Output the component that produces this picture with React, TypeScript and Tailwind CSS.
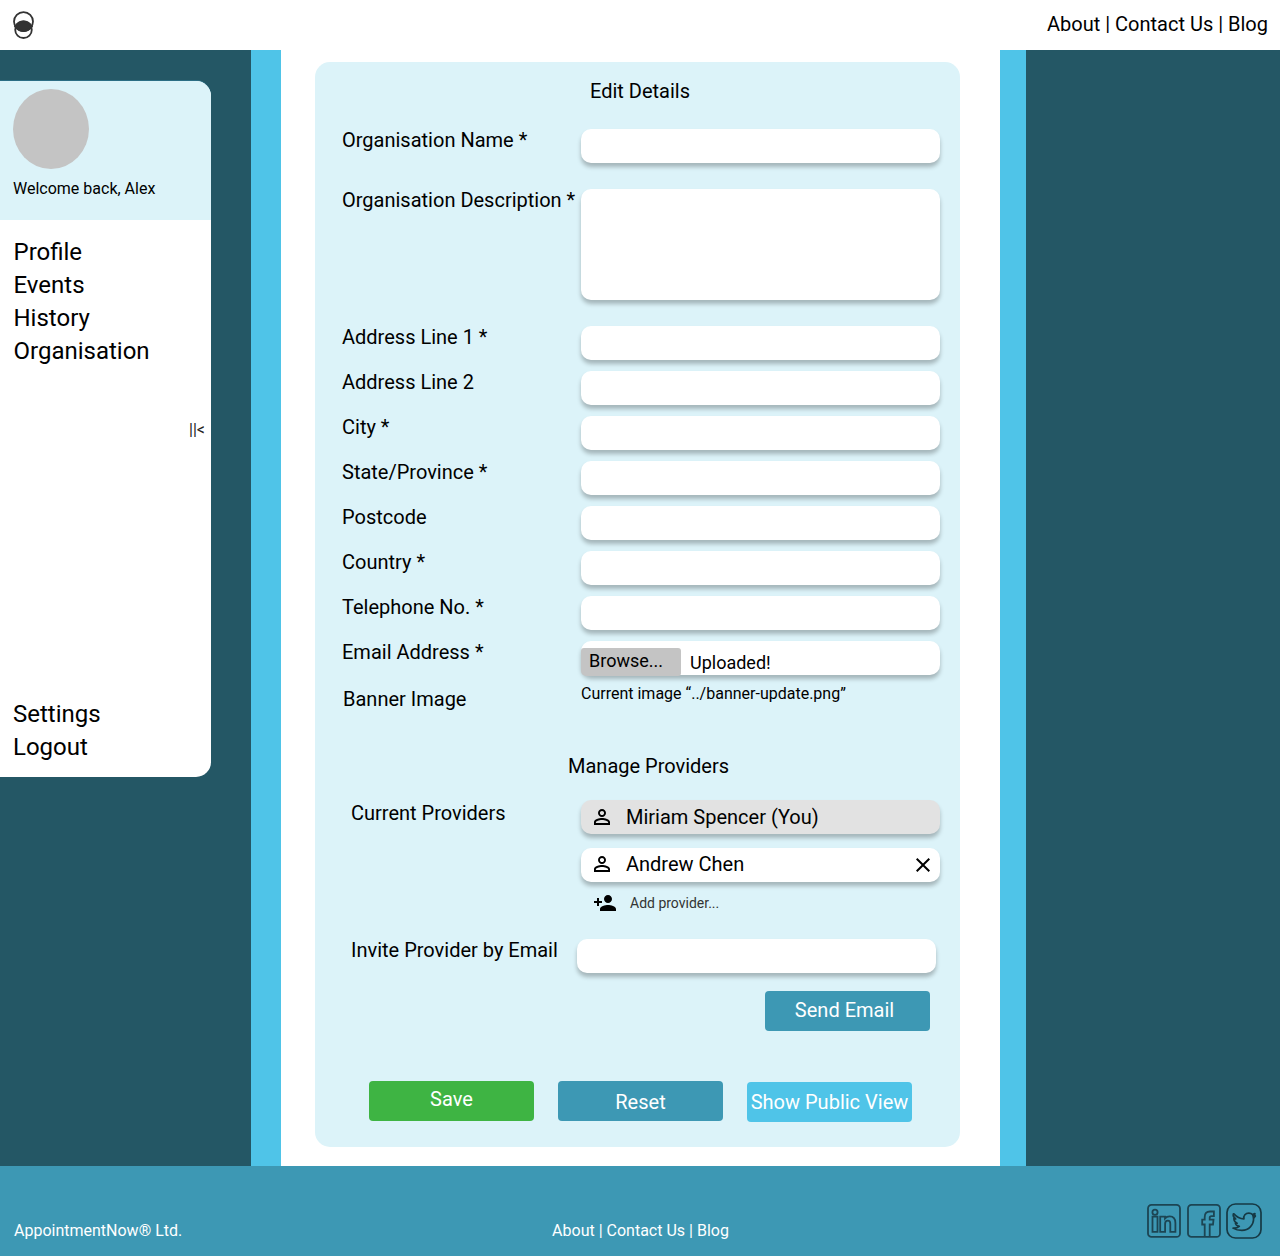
import type { ReactNode } from "react";

const FIELD = "w-[359px] shrink-0 rounded-[10px] shadow-[0_4px_4px_rgba(0,0,0,0.25)]";

function Logo() {
  return (
    <svg width="22" height="30" viewBox="0 0 22 30" fill="none" stroke="#333333" strokeWidth="1.8">
      <circle cx="10.5" cy="11.6" r="9.500" />
      <circle cx="10.5" cy="19.700" r="8.300" />
      <path d="M2 16.4C4.5 12.900 7.3 11.400 10.5 11.400s6 1.500 8.500 5C16.500 19.600 14 21.100 10.500 21.100S4.500 19.600 2 16.400Z" fill="#333333" />
    </svg>
  );
}

function PersonIcon() {
  return (
    <svg width="16" height="16" viewBox="4 4 16 16" fill="#000">
      <path d="M12 5.900c1.160 0 2.100.940 2.100 2.100s-.940 2.100-2.100 2.100S9.900 9.160 9.900 8s.940-2.100 2.100-2.100m0 9c2.970 0 6.100 1.460 6.100 2.100v1.100H5.900V17c0-.640 3.130-2.100 6.100-2.100M12 4C9.790 4 8 5.790 8 8s1.790 4 4 4 4-1.790 4-4-1.790-4-4-4zm0 9c-2.670 0-8 1.340-8 4v3h16v-3c0-2.660-5.330-4-8-4z" />
    </svg>
  );
}

function AddPersonIcon() {
  return (
    <svg width="22" height="16" viewBox="1 4 22 16" fill="#000">
      <path d="M15 12c2.210 0 4-1.790 4-4s-1.790-4-4-4-4 1.790-4 4 1.790 4 4 4zm-9-2V7H4v3H1v2h3v3h2v-3h3v-2H6zm9 4c-2.670 0-8 1.340-8 4v2h16v-2c0-2.660-5.330-4-8-4z" />
    </svg>
  );
}

function CloseIcon() {
  return (
    <svg width="14" height="14" viewBox="5 5 14 14" fill="#000">
      <path d="M19 6.410 17.590 5 12 10.590 6.410 5 5 6.410 10.590 12 5 17.590 6.410 19 12 13.410 17.590 19 19 17.590 13.410 12z" />
    </svg>
  );
}

function SocialIcons() {
  return (
    <div className="flex">
      <svg width="34" height="36" viewBox="0 0 34 36" fill="none" stroke="#1c4553" strokeWidth="1.800">
        <rect x="1" y="1.900" width="32" height="32" rx="3.500" />
        <circle cx="8" cy="9.300" r="2.600" />
        <path d="M5.500 13.700h5v15.200h-5zM13.200 13.700h4.800v1.700c1-1.300 2.500-2 4.700-2 4 0 5.700 2.500 5.700 6.600v8.900h-5.100v-8.100c0-2.100-.700-3.200-2.400-3.200-1.800 0-2.800 1.200-2.800 3.200v8.100h-4.900z" />
      </svg>
      <svg className="ml-1.5" width="34" height="36" viewBox="0 0 34 36" fill="none" stroke="#1c4553" strokeWidth="1.800">
        <rect x="1" y="1.900" width="32" height="32" rx="3.500" />
        <path d="M17.700 34V21.500h-2.500v-4.800h2.500v-2.500c0-4 2-5.700 5.300-5.700h3.900v4.700h-2.500c-1.300 0-1.700.500-1.700 1.600v1.900h3.800l-.5 4.800h-3.300V34" />
      </svg>
      <svg className="ml-[5px]" width="36" height="36" viewBox="0 0 36 36" fill="none" stroke="#163944" strokeWidth="1.700" strokeLinejoin="round">
        <rect x="1" y="1" width="34" height="34" rx="8.500" />
        <path d="M7.900 10.800c2.700 3.200 6 5 10 5.200-.7-3.500 1.700-5.900 4.900-5.900 1.600 0 2.900.6 3.900 1.600l2-1-.6 2.200 1.200.1-1.700 2c.2 7.100-4.900 12.400-11.700 12.400-3.500 0-6.300-.7-8.900-2.300 2.800.2 4.700-.400 6.300-1.700-2-.3-3.300-1.300-3.900-3.100l1.700-.1c-2-.9-3.200-2.400-3.200-4.700l1.800.5c-2.100-1.500-2.900-3.300-2.300-5.200Z" />
        <path d="m26.700 11.700 2-1-.6 2.200 1.200.1-1.700 2Z" fill="#163944" />
      </svg>
    </div>
  );
}

function Row({ label, className, children }: { label: string; className: string; children?: ReactNode }) {
  return (
    <div className={`flex items-start justify-between ${className}`}>
      <span className="whitespace-nowrap">{label}</span>
      {children}
    </div>
  );
}

const TEXT_FIELDS = [
  "Address Line 1 *",
  "Address Line 2",
  "City *",
  "State/Province *",
  "Postcode",
  "Country *",
  "Telephone No. *",
];

function Sidebar() {
  return (
    <aside className="mt-[31px] flex h-[696px] w-[211px] flex-col overflow-hidden rounded-r-[15px] bg-white text-2xl leading-[33px] shadow-[0_-1px_0_#2c6e85]">
      <div className="h-[139px] shrink-0 bg-[#dcf3f9] pt-2 pl-[13px]">
        <div className="h-20 w-[76px] rounded-[50%] bg-[#c4c4c4]" />
        <p className="mt-2.5 text-base leading-[19px]">Welcome back, Alex</p>
      </div>
      <nav className="mt-4 flex flex-col pl-[13.5px]">
        <a>Profile</a>
        <a>Events</a>
        <a>History</a>
        <a>Organisation</a>
      </nav>
      <button className="mt-[52px] mr-1.5 self-end text-base leading-[19px] text-[#222222]">||&lt;</button>
      <nav className="mt-auto mb-[13px] flex flex-col pl-[13px]">
        <a>Settings</a>
        <a>Logout</a>
      </nav>
    </aside>
  );
}

function DetailsPanel() {
  return (
    <section className="mt-3 h-[1085px] w-[645px] rounded-[15px] bg-[#dcf3f9] pt-[18px] pr-5 pl-[27px]">
      <h1 className="pl-[248px]">Edit Details</h1>
      <Row label="Organisation Name *" className="mt-[26px] h-[60px]">
        <div className={`${FIELD} h-[34px] bg-white`} />
      </Row>
      <Row label="Organisation Description *" className="h-[137px]">
        <div className={`${FIELD} h-[111px] bg-white`} />
      </Row>
      {TEXT_FIELDS.map((label) => (
        <Row key={label} label={label} className="h-[45px]">
          <div className={`${FIELD} h-[34px] bg-white`} />
        </Row>
      ))}
      <Row label="Email Address *" className="h-[43px]">
        <div className={`${FIELD} flex h-[34px] items-start bg-white text-lg leading-[21px]`}>
          <button className="mt-[7px] h-7 w-[100px] rounded-[3px] rounded-bl-[5px] bg-[#c4c4c4] pb-1 pl-2 text-left">
            Browse...
          </button>
          <span className="mt-[11px] ml-[9px]">Uploaded!</span>
        </div>
      </Row>
      <Row label="Banner Image" className="mt-1 h-[67px] pl-px">
        <span className="-mt-1 w-[359px] text-base leading-[19px]">Current image “../banner-update.png”</span>
      </Row>
      <h2 className="pl-[226px]">Manage Providers</h2>
      <div className="mt-[22px] flex items-start justify-between pl-[9px]">
        <span className="mt-0.5">Current Providers</span>
        <div className="w-[359px]">
          <div className={`${FIELD} flex h-[34px] items-center bg-[#e2e2e2] pl-[13px]`}>
            <PersonIcon />
            <span className="ml-4">Miriam Spencer (You)</span>
          </div>
          <div className={`${FIELD} mt-3.5 flex h-[34px] items-center bg-white pr-2.5 pl-[13px]`}>
            <span className="-mt-0.5 flex"><PersonIcon /></span>
            <span className="-mt-0.5 ml-4">Andrew Chen</span>
            <span className="ml-auto flex"><CloseIcon /></span>
          </div>
          <button className="mt-3 flex h-[18px] items-center pl-[13px] text-sm leading-4 text-[#333333]">
            <AddPersonIcon />
            <span className="ml-3.5">Add provider...</span>
          </button>
        </div>
      </div>
      <Row label="Invite Provider by Email" className="mt-[27px] h-[52px] pr-1 pl-[9px]">
        <div className={`${FIELD} h-[34px] bg-white`} />
      </Row>
      <div className="flex justify-end pr-2.5 text-white">
        <button className="h-10 w-[165px] rounded-[4px] bg-[#3d98b4] pr-1.5 pb-0.5">Send Email</button>
      </div>
      <div className="mt-[50px] flex items-start gap-6 pl-[27px] text-white">
        <button className="h-10 w-[165px] rounded-[4px] bg-[#3eb443] pb-1">Save</button>
        <button className="h-10 w-[165px] rounded-[4px] bg-[#3d98b4] pt-0.5">Reset</button>
        <button className="mt-px h-10 w-[165px] rounded-[4px] bg-[#4fc4e8] whitespace-nowrap">Show Public View</button>
      </div>
    </section>
  );
}

export default function App() {
  return (
    <div className="flex h-[1256px] w-[1280px] flex-col overflow-hidden bg-white font-['Roboto',sans-serif] text-xl leading-[23px] text-black">
      <header className="flex h-[50px] shrink-0 items-start justify-between pr-3 pl-[13px]">
        <div className="mt-2.5"><Logo /></div>
        <nav className="mt-[13px]">About | Contact Us | Blog</nav>
      </header>
      <main className="flex h-[1116px] shrink-0 bg-[#245765]">
        <div className="w-[251px]"><Sidebar /></div>
        <div className="flex w-[775px] border-r-[26px] border-l-[30px] border-[#4fc4e8] bg-white pl-[34px]">
          <DetailsPanel />
        </div>
      </main>
      <footer className="grid h-[90px] shrink-0 grid-cols-3 items-start bg-[#3d98b4] text-base leading-[19px] text-white">
        <span className="mt-[55px] pl-3.5">AppointmentNow® Ltd.</span>
        <span className="mt-[55px] pl-px text-center">About | Contact Us | Blog</span>
        <div className="mt-[37px] flex justify-end pr-[18px]"><SocialIcons /></div>
      </footer>
    </div>
  );
}
